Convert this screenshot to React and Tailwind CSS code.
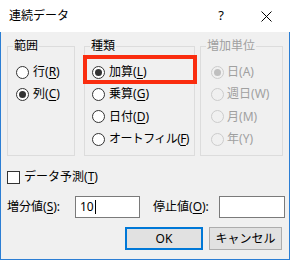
import React from 'react';

const font = { fontFamily: '"Noto Sans", "Noto Sans CJK JP", sans-serif' };

const Radio = ({ checked, disabled }) => (
  <span
    className={`w-[13px] h-[13px] rounded-full border flex items-center justify-center shrink-0 ${
      disabled ? 'border-[#cccccc] bg-[#f0f0f0]' : 'border-[#333333] bg-white'
    }`}
  >
    {checked && (
      <span className={`w-[7px] h-[7px] rounded-full ${disabled ? 'bg-[#bfbfbf]' : 'bg-[#333333]'}`}></span>
    )}
  </span>
);

const Label = ({ text, k, disabled }) => (
  <span className={`whitespace-nowrap ${disabled ? 'text-[#a0a0a0]' : 'text-black'}`}>
    {text}(
    {disabled ? k : <span className="underline underline-offset-2">{k}</span>})
  </span>
);

const Group = ({ title, disabled, className, children }) => (
  <div className={`relative border border-[#dcdcdc] h-[110px] ${className}`}>
    <span
      className={`absolute -top-[10px] left-[5px] px-[1px] bg-[#f0f0f0] leading-[18px] ${
        disabled ? 'text-[#a0a0a0]' : 'text-black'
      }`}
    >
      {title}
    </span>
    <div className="flex flex-col pt-[14px]">{children}</div>
  </div>
);

const Row = ({ pl, gap, children }) => (
  <div className={`h-[22.33px] flex items-center ${pl} ${gap}`}>{children}</div>
);

export default function App() {
  return (
    <div className="w-[291px] h-[262px] bg-white text-[12px] text-black" style={font}>
      {/* title bar */}
      <div className="h-[32px] flex items-center bg-white pl-[9px]">
        <span className="flex-1">連続データ</span>
        <span className="w-[20px] text-center text-[13px] mr-[25px]">?</span>
        <span className="w-[20px] flex justify-center mr-[15px]">
          <svg width="11" height="11" viewBox="0 0 11 11">
            <path d="M0.5 0.5 L10.5 10.5 M10.5 0.5 L0.5 10.5" stroke="#000" strokeWidth="1" />
          </svg>
        </span>
      </div>

      {/* body */}
      <div className="relative h-[228px] w-[290px] bg-[#f0f0f0] border-l border-r border-b border-[#2b7ed4]">
        <div className="flex pt-[14px] pl-[6px]">
          <Group title="範囲" className="w-[68px]">
            <Row pl="pl-[8px]" gap="gap-[4px]">
              <Radio />
              <Label text="行" k="R" />
            </Row>
            <Row pl="pl-[8px]" gap="gap-[4px]">
              <Radio checked />
              <Label text="列" k="C" />
            </Row>
          </Group>
          <Group title="種類" className="w-[111px] ml-[9px]">
            <Row pl="pl-[7px]" gap="gap-[4px]">
              <Radio checked />
              <Label text="加算" k="L" />
            </Row>
            <Row pl="pl-[7px]" gap="gap-[4px]">
              <Radio />
              <Label text="乗算" k="G" />
            </Row>
            <Row pl="pl-[7px]" gap="gap-[4px]">
              <Radio />
              <Label text="日付" k="D" />
            </Row>
            <Row pl="pl-[7px]" gap="gap-[4px]">
              <Radio />
              <span className="tracking-[-0.6px]">
                <Label text="オートフィル" k="F" />
              </span>
            </Row>
          </Group>
          <Group title="増加単位" disabled className="w-[83px] ml-[5px]">
            <Row pl="pl-[10px]" gap="gap-[3px]">
              <Radio checked disabled />
              <Label text="日" k="A" disabled />
            </Row>
            <Row pl="pl-[10px]" gap="gap-[3px]">
              <Radio disabled />
              <Label text="週日" k="W" disabled />
            </Row>
            <Row pl="pl-[10px]" gap="gap-[3px]">
              <Radio disabled />
              <Label text="月" k="M" disabled />
            </Row>
            <Row pl="pl-[10px]" gap="gap-[3px]">
              <Radio disabled />
              <Label text="年" k="Y" disabled />
            </Row>
          </Group>
        </div>

        {/* annotation box */}
        <div className="absolute left-[82px] top-[23px] w-[114px] h-[29px] border-[4px] border-[#fa2d0f]"></div>

        {/* checkbox */}
        <div className="flex items-center gap-[4px] pl-[6px] mt-[14px] h-[14px]">
          <span className="w-[13px] h-[13px] border border-[#333333] bg-white"></span>
          <Label text="データ予測" k="T" />
        </div>

        {/* values */}
        <div className="flex items-center pl-[6px] mt-[12px] h-[22px]">
          <span className="w-[68px]">
            <Label text="増分値" k="S" />:
          </span>
          <div className="w-[65px] h-[22px] border border-[#7a7a7a] bg-white flex items-center pl-[4px]">
            10<span className="w-[1px] h-[14px] bg-black ml-[1px]"></span>
          </div>
          <span className="ml-[13px] w-[66px]">
            <Label text="停止値" k="O" />:
          </span>
          <div className="w-[66px] h-[22px] border border-[#7a7a7a] bg-white"></div>
        </div>

        {/* buttons */}
        <div className="flex pl-[124px] mt-[9px] gap-[6px]">
          <button className="w-[78px] h-[23px] border-2 border-[#0078d7] bg-[#e1e1e1]">OK</button>
          <button className="w-[73px] h-[23px] border border-[#adadad] bg-[#e1e1e1]">キャンセル</button>
        </div>
      </div>
    </div>
  );
}
